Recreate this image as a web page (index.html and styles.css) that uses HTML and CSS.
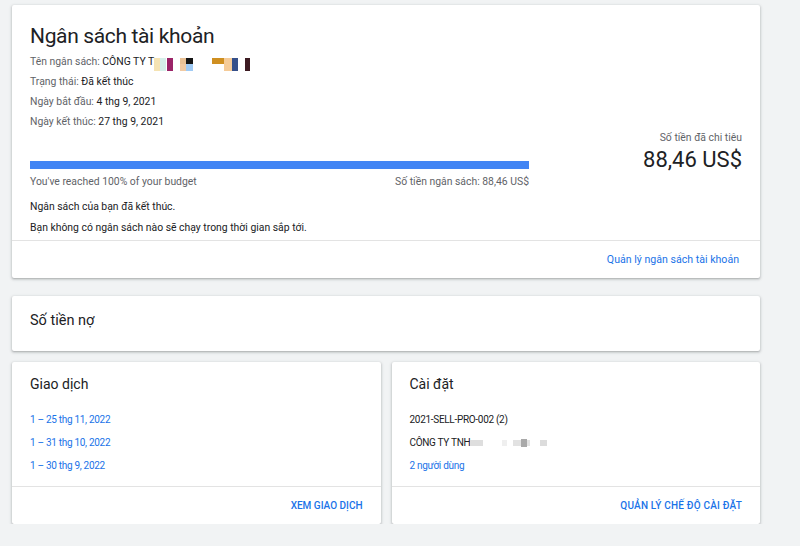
FILE: index.html
```html
<!DOCTYPE html>
<html lang="vi">
<head>
<meta charset="utf-8">
<title>Ngân sách tài khoản</title>
<link rel="stylesheet" href="styles.css">
</head>
<body>
<main class="page">
  <section class="card budget">
    <div class="budget-main">
      <div class="budget-left">
        <h1 class="title">Ngân sách tài khoản</h1>
        <div class="details">
          <div class="row"><span class="label">Tên ngân sách:</span> <span class="value">CÔNG TY T</span><svg class="redact-color" width="96" height="13" viewBox="0 0 96 13" aria-hidden="true"><rect x="0" y="0" width="6" height="13" fill="#f5e3b3"/><rect x="6" y="0" width="6" height="13" fill="#d5efe9"/><rect x="13" y="0" width="6" height="13" fill="#9b2468"/><rect x="26" y="0" width="6" height="6" fill="#e9c195"/><rect x="26" y="6" width="6" height="7" fill="#f1caa3"/><rect x="32" y="0" width="7" height="6" fill="#151515"/><rect x="32" y="6" width="7" height="7" fill="#9fcaf4"/><rect x="58" y="0" width="12" height="6" fill="#cf8f20"/><rect x="70" y="0" width="8" height="13" fill="#f5cb98"/><rect x="78" y="0" width="6" height="13" fill="#36508a"/><rect x="91" y="0" width="5" height="13" fill="#3d1b22"/></svg></div>
          <div class="row"><span class="label">Trạng thái:</span> <span class="value">Đã kết thúc</span></div>
          <div class="row"><span class="label">Ngày bắt đầu:</span> <span class="value">4 thg 9, 2021</span></div>
          <div class="row"><span class="label">Ngày kết thúc:</span> <span class="value">27 thg 9, 2021</span></div>
        </div>
        <div class="bar"><div class="bar-fill" style="width:100%"></div></div>
        <div class="bar-labels">
          <span>You've reached 100% of your budget</span>
          <span>Số tiền ngân sách: 88,46 US$</span>
        </div>
        <p class="msg">Ngân sách của bạn đã kết thúc.</p>
        <p class="msg">Bạn không có ngân sách nào sẽ chạy trong thời gian sắp tới.</p>
      </div>
      <div class="budget-right">
        <div class="spent-label">Số tiền đã chi tiêu</div>
        <div class="spent-amount">88,46 US$</div>
      </div>
    </div>
    <div class="card-footer footer-budget">
      <a class="link link-lg" href="#">Quản lý ngân sách tài khoản</a>
    </div>
  </section>

  <section class="card debt">
    <h2 class="card-title debt-title">Số tiền nợ</h2>
  </section>

  <div class="grid">
    <section class="card half">
      <div class="half-body">
        <h2 class="card-title">Giao dịch</h2>
        <ul class="list">
          <li><a class="link" href="#">1 – 25 thg 11, 2022</a></li>
          <li><a class="link" href="#">1 – 31 thg 10, 2022</a></li>
          <li><a class="link" href="#">1 – 30 thg 9, 2022</a></li>
        </ul>
      </div>
      <div class="card-footer">
        <a class="btn" href="#">Xem giao dịch</a>
      </div>
    </section>
    <section class="card half">
      <div class="half-body">
        <h2 class="card-title">Cài đặt</h2>
        <ul class="list">
          <li class="dark">2021-SELL-PRO-002 (2)</li>
          <li class="dark">CÔNG TY TNH<svg class="redact-gray" width="77" height="8" viewBox="0 0 77 8" aria-hidden="true"><rect x="0" y="1" width="13" height="6" fill="#dedede"/><rect x="32" y="1" width="5" height="6" fill="#efefef"/><rect x="43" y="1" width="8" height="6" fill="#e2e2e2"/><rect x="51" y="0" width="6" height="8" fill="#a9a9a9"/><rect x="57" y="1" width="3" height="6" fill="#e2e2e2"/><rect x="70" y="1" width="7" height="6" fill="#dcdcdc"/></svg></li>
          <li><a class="link" href="#">2 người dùng</a></li>
        </ul>
      </div>
      <div class="card-footer">
        <a class="btn btn-wide" href="#">Quản lý chế độ cài đặt</a>
      </div>
    </section>
  </div>
</main>
</body>
</html>
```

FILE: styles.css
```css
* { box-sizing: border-box; }

html, body {
  margin: 0;
  padding: 0;
  background: #f1f3f4;
  font-family: Roboto, "Noto Sans", "Liberation Sans", sans-serif;
  color: #202124;
}

.page {
  width: 760px;
  padding: 5px 0 0 12px;
}

.card {
  background: #fff;
  border-radius: 2px;
  box-shadow: 0 1px 2px 0 rgba(60, 64, 67, 0.3), 0 1px 3px 1px rgba(60, 64, 67, 0.12);
}

/* Top budget card */
.budget-main {
  display: flex;
  padding: 18px 18px 2px 18px;
}

.budget-left {
  width: 499px;
  flex: none;
}

.title {
  margin: 0;
  font-size: 21px;
  line-height: 27px;
  letter-spacing: -0.35px;
  font-weight: 400;
  color: #202124;
}

.details {
  margin-top: 2px;
}

.row {
  font-size: 10.4px;
  line-height: 20px;
  height: 20px;
  white-space: nowrap;
}

.label { color: #5f6368; }
.value { color: #202124; }

.redact-color {
  vertical-align: -6px;
  display: inline-block;
}

.bar {
  margin-top: 29px;
  height: 8px;
  background: #e8eaed;
}

.bar-fill {
  height: 100%;
  background: #4285f4;
}

.bar-labels {
  display: flex;
  justify-content: space-between;
  margin-top: 5px;
  font-size: 10.4px;
  line-height: 15px;
  color: #5f6368;
}

.msg {
  margin: 0;
  font-size: 10.4px;
  line-height: 21px;
  color: #202124;
}

.bar-labels + .msg { margin-top: 7px; }

.budget-right {
  flex: 1;
  text-align: right;
  padding-top: 108px;
}

.spent-label {
  font-size: 10.4px;
  line-height: 14px;
  color: #5f6368;
}

.spent-amount {
  margin-top: 2px;
  font-size: 22px;
  line-height: 26px;
  color: #202124;
}

.card-footer {
  border-top: 1px solid #e3e3e3;
  height: 38px;
  display: flex;
  align-items: center;
  justify-content: flex-end;
  padding-right: 18px;
}

.footer-budget {
  padding-right: 21px;
}

.link {
  color: #1a73e8;
  text-decoration: none;
  font-size: 10px;
}

.link-lg {
  font-size: 10.6px;
}

.btn {
  color: #1a73e8;
  text-decoration: none;
  font-size: 10px;
  font-weight: 500;
  text-transform: uppercase;
}

.btn-wide {
  letter-spacing: 0.2px;
}

/* Debt card */
.debt {
  margin-top: 18px;
  height: 55px;
  padding: 15px 0 0 18px;
}

.card-title {
  margin: 0;
  font-size: 14px;
  line-height: 20px;
  font-weight: 400;
  color: #202124;
}

.debt-title {
  font-size: 14.5px;
}

/* Bottom cards */
.grid {
  margin-top: 11px;
  display: grid;
  grid-template-columns: 1fr 1fr;
  gap: 11px;
}

.half-body {
  height: 124px;
  padding: 12px 18px 0 18px;
}

.list {
  list-style: none;
  margin: 14px 0 0 0;
  padding: 0;
}

.list li {
  font-size: 10px;
  line-height: 23px;
  height: 23px;
  letter-spacing: -0.3px;
  white-space: nowrap;
}

.list .dark { color: #202124; }

.redact-gray {
  display: inline-block;
  vertical-align: -1px;
}
```
